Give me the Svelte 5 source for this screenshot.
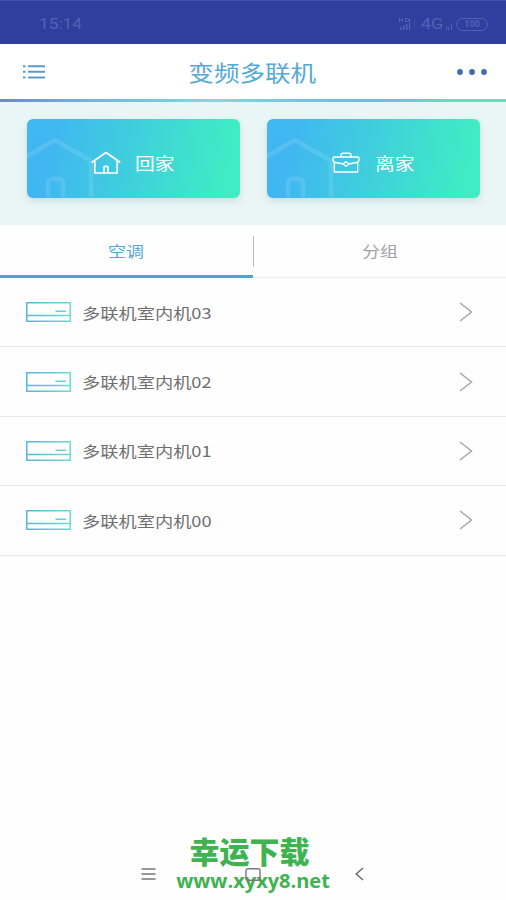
<script>
  let activeTab = 'aircon';

  const tabs = [
    { id: 'aircon', label: '空调' },
    { id: 'group', label: '分组' }
  ];

  const scenes = [
    { id: 'home', label: '回家' },
    { id: 'away', label: '离家' }
  ];

  const devices = ['多联机室内机03', '多联机室内机02', '多联机室内机01', '多联机室内机00'];
</script>

<div class="phone">
  <div class="status">
    <span class="time">15:14</span>
    <div class="status-right">
      <svg width="19" height="14" viewBox="0 0 19 14" fill="currentColor">
        <path d="M1 1h1v4H1zM4 1h1v4H4zM2 2.5h2v1H2zM7 1h1v4H7zM8 1h2v1H8zM8 4h2v1H8zM10 2h1v2h-1zM2 10h1.5v3H2zM5 8h1.5v5H5zM8 7h1.5v6H8zM11 2h1.2v11H11z" />
        <path d="M16 1h1v12h-1z" opacity=".35" />
      </svg>
      <span class="network">4G</span>
      <svg class="bars" width="8" height="6" viewBox="0 0 8 6" fill="currentColor">
        <path d="M1 2h1v4H1zM3 3h1v3H3zM6 0h1v6H6z" />
      </svg>
      <span class="battery">100</span>
    </div>
  </div>

  <header>
    <button aria-label="menu">
      <svg width="22" height="14" viewBox="0 0 22 14" stroke="#5a9bcb" stroke-width="2">
        <path d="M0 1.2h2.5M5 1.2h17M0 6.8h2.5M5 6.8h17M0 12.4h2.5M5 12.4h17" />
      </svg>
    </button>
    <h1>变频多联机</h1>
    <button aria-label="more">
      <svg width="30" height="6" viewBox="0 0 30 6" fill="#3b6db0">
        <circle cx="3" cy="3" r="2.9" />
        <circle cx="15" cy="3" r="2.9" />
        <circle cx="27" cy="3" r="2.9" />
      </svg>
    </button>
  </header>
  <div class="rainbow"></div>

  <section class="scenes">
    {#each scenes as scene}
      <button class="scene">
        <svg class="backdrop" width="72" height="78" viewBox="0 0 72 78" fill="none" stroke="#fff" stroke-width="4.5">
          <path d="M-8 42L28 21L64 42V84M21 84V64Q21 60 25 60H32Q36 60 36 64V84" stroke-linejoin="round" />
        </svg>
        {#if scene.id === 'home'}
          <svg class="icon" width="30" height="24" viewBox="0 0 30 24" fill="none" stroke="#fff" stroke-width="1.7" stroke-linejoin="round" stroke-linecap="round">
            <path d="M1.3 11L15 1.5L28.7 11M3.8 10V22H26.2V10M13 21.5V16.5Q13 15.3 14 15.3H16Q17 15.3 17 16.5V21.5" />
          </svg>
        {:else}
          <svg class="icon" width="30" height="24" viewBox="0 0 30 24" fill="none" stroke="#fff" stroke-width="1.4" stroke-linejoin="round">
            <path d="M3.5 6H26.5Q28 6 28 7.5V9Q28 11 25.5 11.5L17.5 13M12.5 13L4.5 11.5Q2 11 2 9V7.5Q2 6 3.5 6M3.3 11.3V21H26.7V11.3M10 6V4Q10 2.2 12 2.2H18Q20 2.2 20 4V6" />
            <path d="M15 10.8L18 13L15 15.2L12 13Z" />
          </svg>
        {/if}
        <span>{scene.label}</span>
      </button>
    {/each}
  </section>

  <nav>
    {#each tabs as tab}
      <button class="tab" class:active={activeTab === tab.id} on:click={() => (activeTab = tab.id)}>
        <span>{tab.label}</span>
      </button>
    {/each}
  </nav>

  <ul>
    {#each devices as device}
      <li>
        <svg width="45" height="20" viewBox="0 0 45 20" fill="none" stroke="url(#ac)" stroke-width="1.5">
          <defs>
            <linearGradient id="ac" gradientUnits="userSpaceOnUse" x1="0" y1="0" x2="45" y2="0">
              <stop offset="0" stop-color="#56b5df" />
              <stop offset="1" stop-color="#6cdccb" />
            </linearGradient>
          </defs>
          <path d="M.8 .8H44.2V19.2H.8ZM.8 13.6H44.2M29.5 9.3H40" />
        </svg>
        <span class="name">{device}</span>
        <svg class="chevron" width="14" height="20" viewBox="0 0 14 20" fill="none" stroke="#a6a6a6" stroke-width="1.5">
          <path d="M1 1L12.5 10L1 19" />
        </svg>
      </li>
    {/each}
  </ul>

  <footer>
    <div class="watermark">
      <strong>幸运下载</strong>
      <b>www.xyxy8.net</b>
    </div>
    <svg class="key" width="15" height="12" viewBox="0 0 15 12" stroke="#777" stroke-width="1.3">
      <path d="M.5 1H14.5M.5 6H14.5M.5 11H14.5" />
    </svg>
    <svg class="key" width="16" height="13" viewBox="0 0 16 13" fill="none" stroke="#777" stroke-width="1.4">
      <rect x="1" y=".8" width="14" height="11.4" rx="2" />
    </svg>
    <svg class="key" width="9" height="14" viewBox="0 0 9 14" fill="none" stroke="#666" stroke-width="1.4">
      <path d="M8 1L1.2 7L8 13" />
    </svg>
  </footer>
</div>

<style>
  :global(body) {
    margin: 0;
    background: #fff;
  }

  * {
    box-sizing: border-box;
  }

  .phone {
    width: 506px;
    height: 900px;
    display: flex;
    flex-direction: column;
    overflow: hidden;
    background: #fefefe;
    font-family: "Noto Sans CJK SC", "Noto Sans", sans-serif;
  }

  button {
    border: 0;
    padding: 0;
    background: none;
    font: inherit;
    display: flex;
    align-items: center;
    cursor: pointer;
  }

  .status {
    height: 44px;
    flex: none;
    display: flex;
    justify-content: space-between;
    align-items: center;
    padding: 3px 18px 0 39px;
    background: #303f9f;
    border-top: 1px solid #4451a8;
    color: #5361b2;
    font-family: Roboto, sans-serif;
  }

  .time {
    font-size: 15px;
    transform: scaleX(1.15);
    transform-origin: left;
  }

  .status-right {
    display: flex;
    align-items: center;
  }

  .network {
    font-size: 15px;
    margin-left: 4px;
    transform: scaleX(1.2);
    transform-origin: left;
  }

  .bars {
    margin: 5px 3px 0 5px;
  }

  .battery {
    width: 32px;
    height: 13px;
    border: 1px solid #5361b2;
    border-radius: 7px;
    font-size: 9px;
    line-height: 11px;
    font-weight: 700;
    text-align: center;
  }

  header {
    height: 55px;
    flex: none;
    display: flex;
    align-items: center;
    justify-content: space-between;
    padding: 0 19px 0 23px;
    background: #fff;
  }

  h1 {
    margin: 0 0 1px 3px;
    font-size: 21.3px;
    font-weight: 400;
    color: #55a9d6;
    transform: scaleX(1.2);
  }

  .rainbow {
    height: 3px;
    flex: none;
    background: linear-gradient(90deg, #7085d6, #74b4de 18%, #7fdbd8 42%, #78bfe4 62%, #74b8e0 74%, #5ce3bd 90%);
  }

  .scenes {
    height: 123px;
    flex: none;
    display: flex;
    gap: 27px;
    padding: 17px 26px 0 27px;
    background: #eaf6f6;
  }

  .scene {
    position: relative;
    flex: 1;
    height: 79px;
    padding-left: 64px;
    padding-top: 8px;
    border-radius: 6px;
    overflow: hidden;
    background: linear-gradient(100deg, #40b8f0 14%, #3fecc4 92%);
    box-shadow: 0 3px 7px rgba(90, 140, 140, 0.22);
    color: #fff;
  }

  .backdrop {
    position: absolute;
    left: 0;
    top: 0;
    opacity: 0.11;
  }

  .scene span {
    margin-left: 14px;
    font-size: 16.5px;
    transform: scaleX(1.2);
    transform-origin: left;
  }

  nav {
    height: 53px;
    flex: none;
    display: flex;
    border-bottom: 1px solid #ececec;
  }

  .tab {
    position: relative;
    width: 50%;
    height: 53px;
    justify-content: center;
    padding: 0 0 2px 2px;
    font-size: 15px;
    color: #a2a2a2;
  }

  .tab span {
    transform: scaleX(1.2);
  }

  .tab.active {
    color: #55a9d6;
    border-bottom: 3px solid #4da3d3;
    padding: 1px 0 0;
  }

  .tab:first-child::after {
    content: "";
    position: absolute;
    right: -1px;
    top: 11px;
    width: 1px;
    height: 31px;
    background: #bbb;
  }

  ul {
    flex: 1;
    list-style: none;
    margin: 0;
    padding: 0;
  }

  li {
    height: 69.4px;
    display: flex;
    align-items: center;
    padding: 0 33px 0 26px;
    border-bottom: 1px solid #e8e8e8;
  }

  .name {
    margin: 0 0 1px 11px;
    font-size: 15.2px;
    color: #6e6e6e;
    transform: scaleX(1.2);
    transform-origin: left;
  }

  .chevron {
    margin-left: auto;
  }

  footer {
    position: relative;
    height: 52px;
    flex: none;
    display: grid;
    grid-template-columns: 104px 110px 9px;
    justify-content: start;
    align-items: center;
    padding-left: 141px;
  }

  .key {
    z-index: 1;
  }

  .watermark {
    position: absolute;
    left: 0;
    right: 0;
    top: -17px;
    display: flex;
    flex-direction: column;
    align-items: center;
    color: #3fb34f;
  }

  .watermark strong {
    font-size: 30px;
    line-height: 38px;
    font-weight: 900;
    margin-right: 7px;
  }

  .watermark b {
    font-family: "Open Sans", sans-serif;
    font-size: 20px;
    line-height: 24px;
    font-weight: 700;
  }
</style>
